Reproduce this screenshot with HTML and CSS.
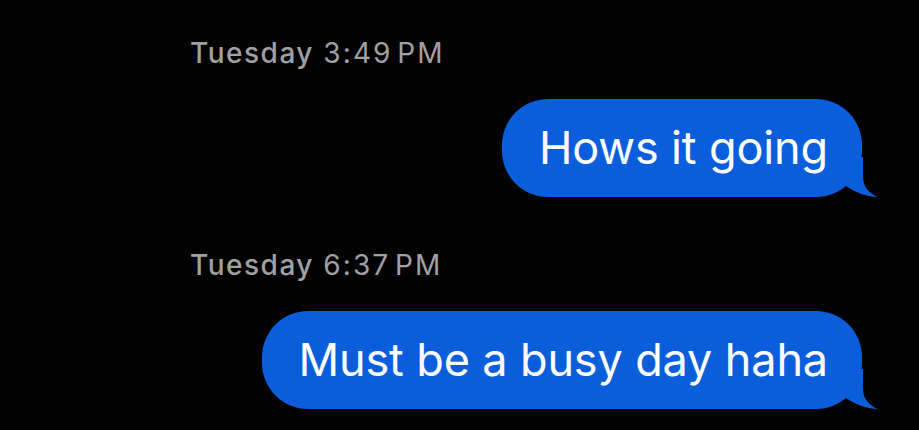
FILE: index.html
```html
<!DOCTYPE html>
<html lang="en">

<head>
    <meta charset="UTF-8">
    <meta name="viewport" content="width=device-width, initial-scale=1.0">
    <title>Messages</title>
    <link rel="stylesheet" href="styles.css">
</head>

<body>
    <div class="thread">
        <div class="stamp"><b>Tuesday</b> <span>3:49&#8202;PM</span></div>
        <div class="bubble first">
            Hows it going
            <svg class="tail" width="32" height="40" viewBox="0 0 32 40">
                <path d="M0,0 L17,0 L17,20 C17,30 24,37 32,40 C22,40 10,36 0,29 Z" />
            </svg>
        </div>

        <div class="stamp second"><b>Tuesday</b> <span>6:37&#8202;PM</span></div>
        <div class="bubble">
            Must be a busy day haha
            <svg class="tail" width="32" height="40" viewBox="0 0 32 40">
                <path d="M0,0 L17,0 L17,20 C17,30 24,37 32,40 C22,40 10,36 0,29 Z" />
            </svg>
        </div>
    </div>
</body>

</html>
```

FILE: styles.css
```css
body {
    margin: 0;
    padding: 0;
    background-color: #000;
    font-family: Inter, "Liberation Sans", sans-serif;
    height: 430px;
    overflow: hidden;
}

.thread {
    display: flex;
    flex-direction: column;
    padding-top: 37px;
}

.stamp {
    font-size: 28px;
    line-height: 32px;
    letter-spacing: 1.5px;
    color: #a0a0a5;
    padding-left: 190px;
}

.stamp b {
    font-weight: 500;
}

.stamp span {
    letter-spacing: 2.1px;
}

.stamp.second {
    margin-top: 52px;
}

.bubble {
    position: relative;
    align-self: flex-end;
    margin-right: 57px;
    margin-top: 30px;
    padding: 22px 34px 22px 37px;
    background-color: #0b5edb;
    color: #fff;
    font-size: 45px;
    line-height: 54px;
    letter-spacing: -0.13px;
    border-radius: 46px;
}

.tail {
    position: absolute;
    right: -16px;
    bottom: 0;
    fill: #0b5edb;
}
```
